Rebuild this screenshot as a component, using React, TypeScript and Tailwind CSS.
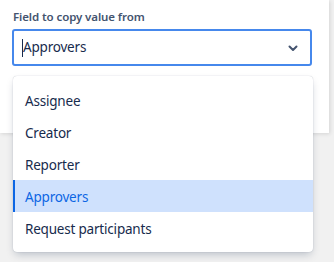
const options = ["Assignee", "Creator", "Reporter", "Approvers", "Request participants"];

export default function App() {
  const selected = "Approvers";

  return (
    <div
      className="relative w-[334px] h-[262px] overflow-hidden bg-[#f1f1f1]"
      style={{ fontFamily: '"Segoe UI", "Noto Sans", "Open Sans", sans-serif' }}
    >
      {/* Panel behind */}
      <div className="w-[329px] h-[133px] bg-white shadow-[1px_1px_4px_rgba(0,0,0,0.12)] px-3 pt-[9px]">
        <label className="block pl-px text-[11.5px] font-semibold leading-[16px] tracking-[-0.1px] text-[#44546f]">
          Field to copy value from
        </label>
        <div className="mt-[4px] w-[300px] h-[37px] rounded-[3px] border-2 border-[#4688ec] flex items-center pl-[8px] pr-[11px]">
          <span className="w-px h-[18px] bg-[#172b4d]" />
          <span className="flex-1 pt-px text-[13.5px] tracking-[-0.2px] text-[#172b4d] leading-none">Approvers</span>
          <svg className="w-[12px] h-[12px] text-[#44546f]" viewBox="0 0 12 12" fill="none">
            <path d="M2.5 4.5 6 8l3.5-3.5" stroke="currentColor" strokeWidth={2} strokeLinecap="round" strokeLinejoin="round" />
          </svg>
        </div>
      </div>

      {/* Menu */}
      <div className="absolute left-[13px] top-[76px] w-[300px] rounded-[4px] bg-white py-2 shadow-[0_4px_8px_-2px_rgba(9,30,66,0.25),0_0_1px_rgba(9,30,66,0.31)]">
        {options.map((o) => {
          const isSel = o === selected;
          return (
            <div
              key={o}
              className={`h-8 flex items-center pt-[2px] pl-3 text-[13.5px] tracking-[-0.2px] ${
                isSel
                  ? "bg-[#cfe1fd] text-[#0c66e4] border-l-2 border-[#0c66e4] pl-[10px]"
                  : "text-[#172b4d]"
              }`}
            >
              {o}
            </div>
          );
        })}
      </div>
    </div>
  );
}
